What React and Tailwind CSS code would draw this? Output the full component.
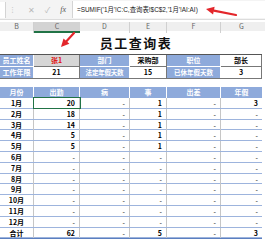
import React from 'react'

const FONT = { fontFamily: '"Noto Sans CJK SC", "DejaVu Sans", sans-serif' }

const months = [
  ['1月', '20', '-', '1', '-', '3'],
  ['2月', '18', '-', '1', '-', '-'],
  ['3月', '14', '-', '1', '-', '-'],
  ['4月', '5', '-', '1', '-', '-'],
  ['5月', '5', '-', '1', '-', '-'],
  ['6月', '-', '-', '-', '-', '-'],
  ['7月', '-', '-', '-', '-', '-'],
  ['8月', '-', '-', '-', '-', '-'],
  ['9月', '-', '-', '-', '-', '-'],
  ['10月', '-', '-', '-', '-', '-'],
  ['11月', '-', '-', '-', '-', '-'],
  ['12月', '-', '-', '-', '-', '-'],
  ['合计', '62', '-', '5', '-', '3'],
]

const COLS = 'grid grid-cols-[34px_46px_50px_37px_54px_41px]'

function Arrow({ className, x1, y1, x2, y2 }) {
  // simple red arrow, head at (x2, y2)
  const ang = Math.atan2(y2 - y1, x2 - x1)
  const L = 8
  const W = 4
  const bx = x2 - L * Math.cos(ang)
  const by = y2 - L * Math.sin(ang)
  const px = -Math.sin(ang) * W
  const py = Math.cos(ang) * W
  return (
    <svg className={className} width="265" height="245" viewBox="0 0 265 245">
      <line x1={x1} y1={y1} x2={bx} y2={by} stroke="#e3262b" strokeWidth="2.2" strokeLinecap="round" />
      <polygon points={`${x2},${y2} ${bx + px},${by + py} ${bx - px},${by - py}`} fill="#e3262b" />
    </svg>
  )
}

export default function App() {
  return (
    <div className="relative w-[265px] h-[245px] overflow-hidden bg-white text-black" style={FONT}>
      {/* formula bar */}
      <div className="h-[20px] flex items-center bg-[#f4f4f4] border-b border-[#dcdcdc]">
        <div className="w-[6px] h-[16px] bg-white border-r border-[#d4d4d4]" />
        <span className="ml-[3px] text-[7px] text-[#b0b0b0]">⋮</span>
        <span className="ml-[12px] text-[8px] text-[#b8b8b8]">✕</span>
        <span className="ml-[10px] text-[8px] text-[#b8b8b8]">✓</span>
        <span className="ml-[10px] text-[8px] italic text-[#555]" style={{ fontFamily: '"Liberation Serif", serif' }}>fx</span>
        <div className="ml-[6px] flex-1 h-[17px] bg-white border-l border-[#d4d4d4] flex items-center pl-[4px]">
          <span
            className="text-[6.4px] text-[#222] whitespace-nowrap"
            style={{ fontFamily: '"Liberation Sans", "Noto Sans CJK SC", sans-serif' }}
          >
            =SUMIF('1月'!C:C,查询表!$C$2,'1月'!AI:AI)
          </span>
        </div>
      </div>

      {/* column letters */}
      <div className={`${COLS} mt-[2px] h-[9px] bg-[#efefef] text-[7px] text-[#666] leading-[9px]`}>
        <div className="text-center border-r border-[#d0d0d0]">B</div>
        <div className="text-center bg-[#d3d3d3] border-b-2 border-[#217346]">C</div>
        <div className="text-center border-r border-[#d0d0d0]">D</div>
        <div className="text-center border-r border-[#d0d0d0]">E</div>
        <div className="text-center border-r border-[#d0d0d0]">F</div>
        <div className="text-center">G</div>
      </div>

      {/* title row */}
      <div className="h-[23px] flex items-center w-[262px] justify-center pl-[10px]">
        <span className="text-[13px] font-bold tracking-[1.5px] text-[#111]">员工查询表</span>
      </div>

      {/* info table */}
      <div className={`${COLS} text-[7px] font-bold leading-[11px] border-t border-[#555] w-[262px]`}>
        <div className="bg-[#8eaadb] text-white text-center border-r border-white border-b">员工姓名</div>
        <div className="bg-[#d6d6d6] text-[#e01010] text-center border-r border-[#777] border-b border-b-[#777]">张1</div>
        <div className="bg-[#8eaadb] text-white text-center border-r border-white border-b">部门</div>
        <div className="text-center border-r border-[#777] border-b border-b-[#777]">采购部</div>
        <div className="bg-[#8eaadb] text-white text-center border-r border-white border-b">职位</div>
        <div className="text-center border-r border-[#777] border-b border-b-[#777]">部长</div>

        <div className="bg-[#8eaadb] text-white text-center border-r border-white">工作年限</div>
        <div className="text-center border-r border-[#777]">21</div>
        <div className="bg-[#8eaadb] text-white text-center border-r border-white text-[6.5px] tracking-[-0.2px]">法定年假天数</div>
        <div className="text-center border-r border-[#777]">15</div>
        <div className="bg-[#8eaadb] text-white text-center border-r border-white text-[6.5px]">已休年假天数</div>
        <div className="text-center border-r border-[#777]">3</div>
      </div>
      <div className="w-[262px] border-t border-[#777]" />

      {/* monthly table */}
      <div className="mt-[8px] w-[262px] text-[7px] font-bold">
        <div className={`${COLS} h-[11px] leading-[11px] bg-[#8eaadb] text-white`}>
          {['月份', '出勤', '病', '事', '出差', '年假'].map((h, i) => (
            <div key={h} className={`text-center ${i < 5 ? 'border-r border-white' : ''}`}>{h}</div>
          ))}
        </div>
        {months.map((r, ri) => (
          <div key={r[0]} className={`${COLS} h-[10.8px] leading-[10px] border-b border-[#9db4dd]`}>
            {r.map((v, i) => (
              <div
                key={i}
                className={
                  (i === 0 ? 'text-center ' : 'text-right pr-[4px] ') +
                  (i < 5 ? 'border-r border-[#c6c6c6] ' : '') +
                  (ri === 0 && i === 1 ? 'outline outline-[1.5px] outline-[#217346] ' : '')
                }
              >
                {v === '-' ? <span className="font-normal">-</span> : v}
              </div>
            ))}
          </div>
        ))}
        <div className="border-t border-[#5b7fc0]" />
      </div>

      <Arrow className="absolute left-0 top-0 pointer-events-none" x1={236} y1={15} x2={206} y2={9} />
      <Arrow className="absolute left-0 top-0 pointer-events-none" x1={74} y1={33} x2={61} y2={47} />
    </div>
  )
}
